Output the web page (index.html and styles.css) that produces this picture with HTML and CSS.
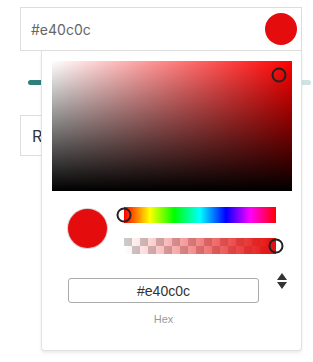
FILE: index.html
```html
<!DOCTYPE html>
<html lang="en">
<head>
    <meta charset="UTF-8">
    <meta name="viewport" content="width=device-width, initial-scale=1.0">
    <title>Colour picker</title>
    <link rel="stylesheet" href="styles.css">
</head>
<body>
    <div class="form">
        <div class="color-input">
            <div class="color-field">
                <span class="color-value">#e40c0c</span>
                <span class="swatch"></span>
            </div>

            <!-- Picker popup, open -->
            <div class="picker">
                <div class="saturation">
                    <div class="sat-white"></div>
                    <div class="sat-black"></div>
                    <div class="sat-pointer"></div>
                </div>

                <div class="controls">
                    <div class="preview"></div>
                    <div class="bars">
                        <div class="hue">
                            <div class="thumb thumb-start"></div>
                        </div>
                        <div class="alpha">
                            <div class="alpha-fill"></div>
                            <div class="thumb thumb-end"></div>
                        </div>
                    </div>
                </div>

                <div class="fields">
                    <div class="field">
                        <input class="hex-input" type="text" value="#e40c0c">
                        <div class="field-label">Hex</div>
                    </div>
                    <div class="toggle">
                        <svg width="10" height="16" viewBox="0 0 10 16">
                            <path d="M5 0 L10 7 L0 7 Z" fill="#333"/>
                            <path d="M0 9 L10 9 L5 16 Z" fill="#333"/>
                        </svg>
                    </div>
                </div>
            </div>
        </div>

        <div class="range">
            <div class="range-track"></div>
        </div>

        <div class="select-box">Red</div>
    </div>
</body>
</html>
```

FILE: styles.css
```css
html,
body {
    min-height: 100%;
}

body {
    margin: 0;
    padding: 0;
    min-height: 100vh;
    background: #fff;
    font-family: Inter, "Noto Sans", sans-serif;
}

.form {
    width: 282px;
    padding: 7px 0 0 20px;
}

.color-input {
    position: relative;
}

.color-field {
    height: 44px;
    box-sizing: border-box;
    border: 1px solid #ddd;
    display: flex;
    align-items: center;
    justify-content: space-between;
    padding: 0 4px 0 10px;
}

.color-value {
    font-size: 14px;
    color: #666;
}

.swatch {
    width: 32px;
    height: 32px;
    border-radius: 50%;
    background: #e40c0c;
}

/* popup sits over the rest of the form */
.picker {
    position: absolute;
    top: 100%;
    left: 21px;
    z-index: 5;
    width: 261px;
    box-sizing: border-box;
    background: #fff;
    border: 1px solid #e2e2e2;
    border-top: none;
    border-radius: 0 0 4px 4px;
    box-shadow: 0 2px 3px rgba(0, 0, 0, 0.08);
    padding: 10px 9px 24px 10px;
}

.saturation {
    position: relative;
    width: 240px;
    height: 130px;
    background: #f00;
}

.sat-white,
.sat-black {
    position: absolute;
    inset: 0;
}

.sat-white {
    background: linear-gradient(to right, #fff, rgba(255, 255, 255, 0));
}

.sat-black {
    background: linear-gradient(to top, #000, rgba(0, 0, 0, 0));
}

.sat-pointer {
    position: absolute;
    left: 227px;
    top: 14px;
    width: 15px;
    height: 15px;
    box-sizing: border-box;
    border: 2px solid #222;
    border-radius: 50%;
    transform: translate(-50%, -50%);
}

.controls {
    display: flex;
    align-items: flex-start;
    margin-top: 16px;
    padding-left: 16px;
}

.preview {
    width: 39px;
    height: 39px;
    margin-top: 2px;
    border-radius: 50%;
    background: #e40c0c;
    box-shadow: 0 0 0 1px rgba(0, 0, 0, 0.18);
}

.bars {
    width: 152px;
    margin-left: 17px;
}

.hue,
.alpha {
    position: relative;
    height: 16px;
}

.hue {
    background: linear-gradient(to right, #f00 0%, #ff0 17%, #0f0 33%, #0ff 50%, #00f 67%, #f0f 83%, #f00 100%);
}

.alpha {
    margin-top: 15px;
    background: conic-gradient(#fff 0 25%, #ccc 0 50%, #fff 0 75%, #ccc 0) 0 0 / 16px 16px;
}

.alpha-fill {
    position: absolute;
    inset: 0;
    background: linear-gradient(to right, rgba(228, 12, 12, 0), #e40c0c);
}

.thumb {
    position: absolute;
    top: 50%;
    width: 15px;
    height: 15px;
    box-sizing: border-box;
    border: 2px solid #222;
    border-radius: 50%;
}

.thumb-start {
    left: 0;
    transform: translate(-50%, -50%);
}

.thumb-end {
    right: 0;
    transform: translate(50%, -50%);
}

.fields {
    display: flex;
    align-items: flex-start;
    margin-top: 19px;
    padding-left: 16px;
}

.field {
    width: 191px;
    margin-top: 5px;
}

.hex-input {
    display: block;
    width: 100%;
    height: 25px;
    box-sizing: border-box;
    border: 1px solid #aaa;
    border-radius: 3px;
    padding: 0;
    text-align: center;
    font-family: "Liberation Sans", Arial, sans-serif;
    font-size: 14px;
    color: #333;
    outline: none;
}

.field-label {
    margin-top: 10px;
    text-align: center;
    font-family: "Liberation Sans", Arial, sans-serif;
    font-size: 11px;
    line-height: 13px;
    color: #999;
}

.toggle {
    margin-left: 18px;
    height: 16px;
}

.toggle svg {
    display: block;
}

.range {
    width: 283px;
    margin: 29px 0 0 8px;
}

.range-track {
    height: 5px;
    border-radius: 3px;
    background: linear-gradient(to right, #2e7f7c 0 55%, #cfe3e3 55% 100%);
}

.select-box {
    height: 41px;
    box-sizing: border-box;
    margin-top: 30px;
    border: 1px solid #ddd;
    padding-left: 11px;
    display: flex;
    align-items: center;
    font-size: 16px;
    color: #333;
}
```
